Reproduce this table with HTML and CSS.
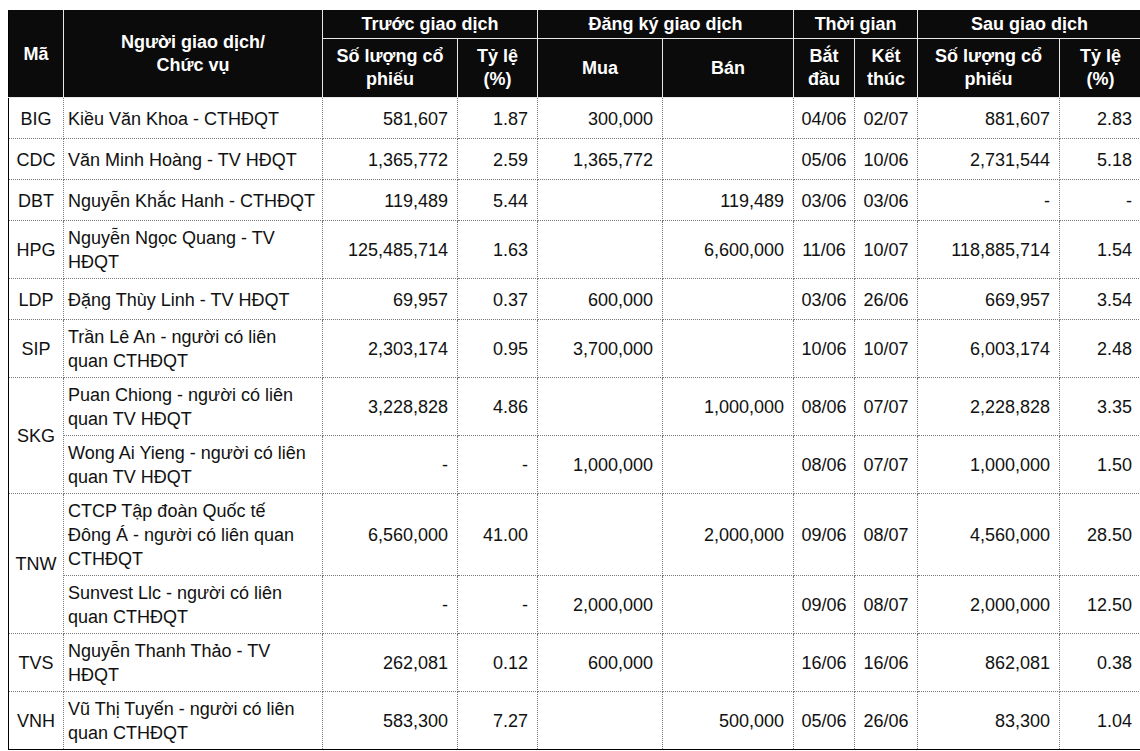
FILE: index.html
```html
<!DOCTYPE html>
<html lang="vi">
<head>
<meta charset="utf-8">
<link rel="stylesheet" href="styles.css">
</head>
<body>
<table class="trades">
  <colgroup>
    <col class="c-ma"><col class="c-name"><col class="c-qty"><col class="c-pct"><col class="c-buy"><col class="c-sell"><col class="c-date"><col class="c-date2"><col class="c-qty2"><col class="c-pct2">
  </colgroup>
  <thead>
    <tr class="h1">
      <th rowspan="2">Mã</th>
      <th rowspan="2">Người giao dịch/<br>Chức vụ</th>
      <th colspan="2">Trước giao dịch</th>
      <th colspan="2">Đăng ký giao dịch</th>
      <th colspan="2">Thời gian</th>
      <th colspan="2">Sau giao dịch</th>
    </tr>
    <tr class="h2">
      <th>Số lượng cổ phiếu</th>
      <th>Tỷ lệ<br>(%)</th>
      <th>Mua</th>
      <th>Bán</th>
      <th>Bắt đầu</th>
      <th>Kết thúc</th>
      <th>Số lượng cổ phiếu</th>
      <th>Tỷ lệ<br>(%)</th>
    </tr>
  </thead>
  <tbody>
    <tr>
      <td class="ma">BIG</td><td class="name">Kiều Văn Khoa - CTHĐQT</td>
      <td class="num">581,607</td><td class="num">1.87</td><td class="num">300,000</td><td class="num"></td>
      <td class="date">04/06</td><td class="date">02/07</td><td class="num">881,607</td><td class="num">2.83</td>
    </tr>
    <tr>
      <td class="ma">CDC</td><td class="name">Văn Minh Hoàng - TV HĐQT</td>
      <td class="num">1,365,772</td><td class="num">2.59</td><td class="num">1,365,772</td><td class="num"></td>
      <td class="date">05/06</td><td class="date">10/06</td><td class="num">2,731,544</td><td class="num">5.18</td>
    </tr>
    <tr>
      <td class="ma">DBT</td><td class="name">Nguyễn Khắc Hanh - CTHĐQT</td>
      <td class="num">119,489</td><td class="num">5.44</td><td class="num"></td><td class="num">119,489</td>
      <td class="date">03/06</td><td class="date">03/06</td><td class="num">-</td><td class="num">-</td>
    </tr>
    <tr>
      <td class="ma">HPG</td><td class="name">Nguyễn Ngọc Quang - TV HĐQT</td>
      <td class="num">125,485,714</td><td class="num">1.63</td><td class="num"></td><td class="num">6,600,000</td>
      <td class="date">11/06</td><td class="date">10/07</td><td class="num">118,885,714</td><td class="num">1.54</td>
    </tr>
    <tr>
      <td class="ma">LDP</td><td class="name">Đặng Thùy Linh - TV HĐQT</td>
      <td class="num">69,957</td><td class="num">0.37</td><td class="num">600,000</td><td class="num"></td>
      <td class="date">03/06</td><td class="date">26/06</td><td class="num">669,957</td><td class="num">3.54</td>
    </tr>
    <tr>
      <td class="ma">SIP</td><td class="name">Trần Lê An - người có liên quan CTHĐQT</td>
      <td class="num">2,303,174</td><td class="num">0.95</td><td class="num">3,700,000</td><td class="num"></td>
      <td class="date">10/06</td><td class="date">10/07</td><td class="num">6,003,174</td><td class="num">2.48</td>
    </tr>
    <tr>
      <td class="ma" rowspan="2">SKG</td><td class="name">Puan Chiong - người có liên quan TV HĐQT</td>
      <td class="num">3,228,828</td><td class="num">4.86</td><td class="num"></td><td class="num">1,000,000</td>
      <td class="date">08/06</td><td class="date">07/07</td><td class="num">2,228,828</td><td class="num">3.35</td>
    </tr>
    <tr>
      <td class="name">Wong Ai Yieng - người có liên quan TV HĐQT</td>
      <td class="num">-</td><td class="num">-</td><td class="num">1,000,000</td><td class="num"></td>
      <td class="date">08/06</td><td class="date">07/07</td><td class="num">1,000,000</td><td class="num">1.50</td>
    </tr>
    <tr>
      <td class="ma" rowspan="2">TNW</td><td class="name">CTCP Tập đoàn Quốc tế<br>Đông Á - người có liên quan CTHĐQT</td>
      <td class="num">6,560,000</td><td class="num">41.00</td><td class="num"></td><td class="num">2,000,000</td>
      <td class="date">09/06</td><td class="date">08/07</td><td class="num">4,560,000</td><td class="num">28.50</td>
    </tr>
    <tr>
      <td class="name">Sunvest Llc - người có liên quan CTHĐQT</td>
      <td class="num">-</td><td class="num">-</td><td class="num">2,000,000</td><td class="num"></td>
      <td class="date">09/06</td><td class="date">08/07</td><td class="num">2,000,000</td><td class="num">12.50</td>
    </tr>
    <tr>
      <td class="ma">TVS</td><td class="name">Nguyễn Thanh Thảo - TV HĐQT</td>
      <td class="num">262,081</td><td class="num">0.12</td><td class="num">600,000</td><td class="num"></td>
      <td class="date">16/06</td><td class="date">16/06</td><td class="num">862,081</td><td class="num">0.38</td>
    </tr>
    <tr>
      <td class="ma">VNH</td><td class="name">Vũ Thị Tuyến - người có liên quan CTHĐQT</td>
      <td class="num">583,300</td><td class="num">7.27</td><td class="num"></td><td class="num">500,000</td>
      <td class="date">05/06</td><td class="date">26/06</td><td class="num">83,300</td><td class="num">1.04</td>
    </tr>
  </tbody>
</table>
</body>
</html>
```

FILE: styles.css
```css
html, body {
  margin: 0;
  padding: 0;
  background: #ffffff;
}

body {
  padding: 10px 0 0 8px;
  font-family: "Liberation Sans", Arial, sans-serif;
  font-size: 18px;
  color: #111111;
  overflow: hidden;
}

.trades {
  border-collapse: collapse;
  table-layout: fixed;
  width: 1133px;
  border: 1px solid #000000;
}

.c-ma { width: 55px; }
.c-name { width: 259px; }
.c-qty { width: 135px; }
.c-pct { width: 80px; }
.c-buy { width: 125px; }
.c-sell { width: 131px; }
.c-date { width: 61px; }
.c-date2 { width: 63px; }
.c-qty2 { width: 142px; }
.c-pct2 { width: 82px; }

.trades th {
  background: #0b0b0b;
  color: #ffffff;
  font-weight: bold;
  text-align: center;
  vertical-align: middle;
  line-height: 23px;
  padding: 0 4px;
  border: 1px solid #e8e8e8;
}

.trades thead tr:first-child th {
  border-top-color: #0b0b0b;
}

.trades .h1 th:first-child {
  border-left-color: #000000;
}

.trades .h1 {
  height: 28px;
}

.trades .h2 {
  height: 59px;
}

.trades td {
  border: 1px dotted #7a7a7a;
  line-height: 24px;
  padding: 5px 8px 4px 4px;
  vertical-align: middle;
}

.trades tbody tr {
  height: 41px;
}

.trades td.ma {
  text-align: center;
  padding: 5px 2px 4px;
  border-left: 1px solid #000000;
}

.trades td.name {
  text-align: left;
  padding-left: 4px;
  padding-right: 2px;
}

.trades td.num {
  text-align: right;
  padding-right: 9px;
}

.trades td.date {
  text-align: center;
  padding: 5px 2px 4px;
}

.trades tbody tr:last-child td {
  border-bottom: 1px solid #000000;
}
```
